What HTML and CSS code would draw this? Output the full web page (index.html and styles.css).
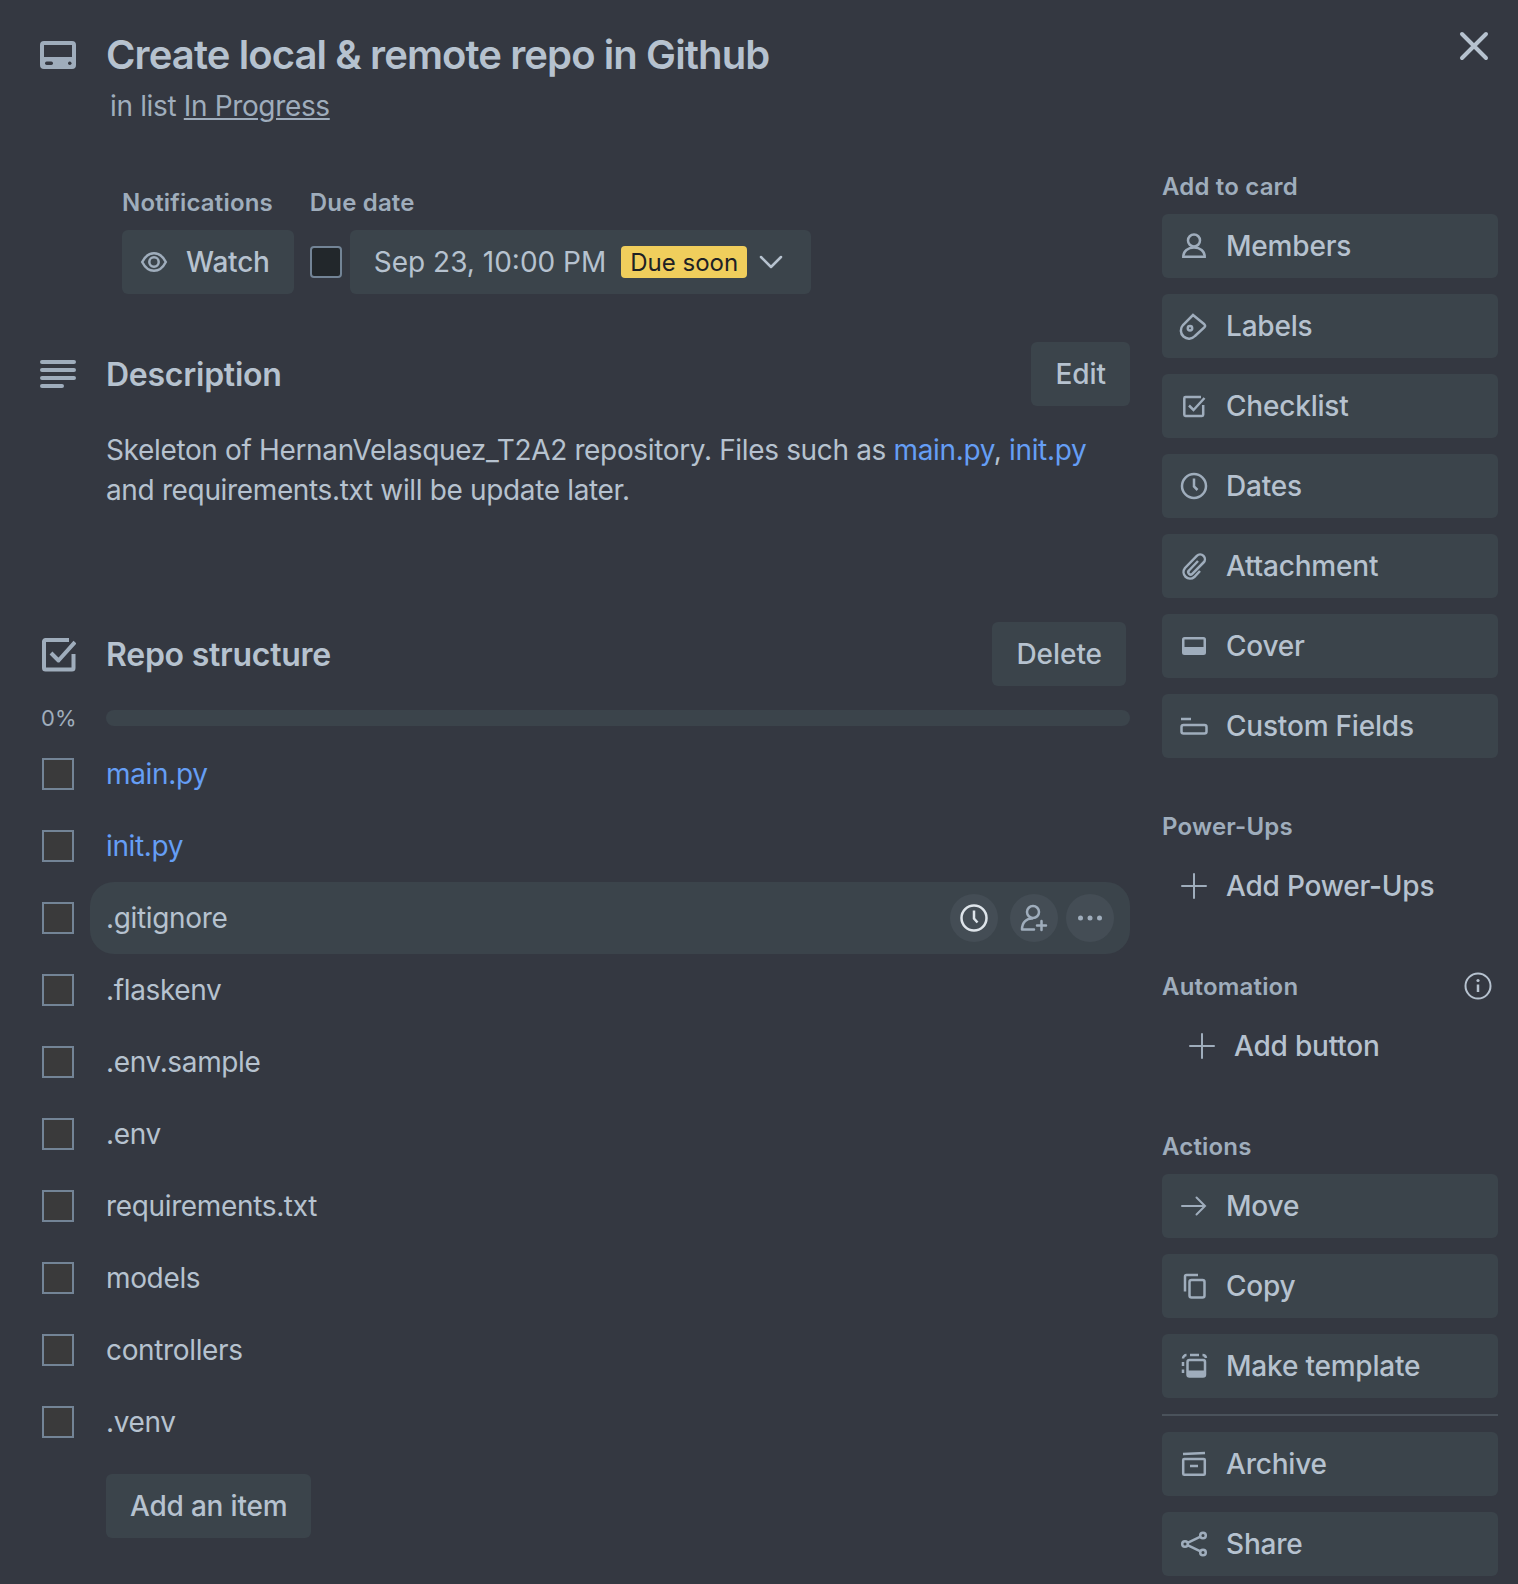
FILE: index.html
```html
<!DOCTYPE html>
<html lang="en">
<head>
    <meta name="viewport" content="width=device-width, initial-scale=1.0">
    <link rel="stylesheet" href="styles.css">
    <title>Create local &amp; remote repo in Github</title>
</head>

<body>
    <div class="card">
        <button class="close" aria-label="Close">
            <svg width="32" height="32" viewBox="0 0 32 32"><path d="M4 4 L28 28 M28 4 L4 28" fill="none" stroke="#b6c2cf" stroke-width="4" stroke-linecap="round"/></svg>
        </button>

        <header class="card-head">
            <div class="head-row">
                <span class="head-icon">
                    <svg width="36" height="28" viewBox="0 0 36 28"><path fill-rule="evenodd" fill="#9fadbc" d="M4 0 H32 A4 4 0 0 1 36 4 V24 A4 4 0 0 1 32 28 H4 A4 4 0 0 1 0 24 V4 A4 4 0 0 1 4 0 Z M4 4 V16 H32 V4 Z"/><rect x="5" y="20.5" width="8" height="3.5" rx="1.7" fill="#343841"/><rect x="28" y="20.5" width="3.5" height="3.5" rx="1.7" fill="#343841"/></svg>
                </span>
                <h1>Create local &amp; remote repo in Github</h1>
            </div>
            <p class="in-list">in list <a href="#">In Progress</a></p>
        </header>

        <main class="main-col">
            <div class="meta">
                <div>
                    <h3>Notifications</h3>
                    <button class="btn watch-btn">
                        <svg width="32" height="32" viewBox="0 0 32 32"><path d="M4.200 16 C7.500 9.500 11 7.200 16 7.200 S24.500 9.500 27.800 16 C24.500 22.500 21 24.800 16 24.800 S7.500 22.500 4.200 16 Z" fill="none" stroke="#9fadbc" stroke-width="2.500"/><circle cx="16" cy="16" r="4.700" fill="none" stroke="#9fadbc" stroke-width="2.500"/></svg>
                        Watch
                    </button>
                </div>
                <div>
                    <h3>Due date</h3>
                    <div class="due-row">
                        <span class="due-check"></span>
                        <button class="btn due-btn">
                            Sep 23, 10:00 PM
                            <span class="badge">Due soon</span>
                            <svg width="24" height="24" viewBox="0 0 24 24"><path d="M2 7 L12 17 L22 7" fill="none" stroke="#b6c2cf" stroke-width="2.500" stroke-linecap="round" stroke-linejoin="round"/></svg>
                        </button>
                    </div>
                </div>
            </div>

            <div class="section-head desc-head">
                <span class="head-icon">
                    <svg width="36" height="30" viewBox="0 0 36 30"><path d="M2 3 H34 M2 11 H34 M2 19 H34 M2 27 H22" fill="none" stroke="#9fadbc" stroke-width="4" stroke-linecap="round"/></svg>
                </span>
                <h2>Description</h2>
                <button class="btn">Edit</button>
            </div>
            <p class="desc">Skeleton of HernanVelasquez_T2A2 repository. Files such as <a href="#">main.py</a>, <a href="#">init.py</a><br>and requirements.txt will be update later.</p>

            <div class="section-head check-head">
                <span class="head-icon">
                    <svg width="36" height="36" viewBox="0 0 36 36"><path d="M29 4 H5.500 A1.500 1.500 0 0 0 4 5.500 V32 A1.500 1.500 0 0 0 5.500 33.500 H32 A1.500 1.500 0 0 0 33.500 32 V18 M11 17 L18.500 24.500 L35 6" fill="none" stroke="#9fadbc" stroke-width="4" stroke-linejoin="round"/></svg>
                </span>
                <h2>Repo structure</h2>
                <button class="btn delete-btn">Delete</button>
            </div>

            <div class="progress">
                <span class="percent">0%</span>
                <div class="bar"></div>
            </div>

            <ul class="items">
                <li class="item"><span class="box"></span><div class="item-text"><a href="#">main.py</a></div></li>
                <li class="item"><span class="box"></span><div class="item-text"><a href="#">init.py</a></div></li>
                <li class="item"><span class="box"></span>
                    <div class="item-text hover">
                        .gitignore
                        <div class="item-actions">
                            <span class="round-btn">
                                <svg width="32" height="32" viewBox="0 0 32 32"><circle cx="16" cy="16" r="12.500" fill="none" stroke="#dee4ea" stroke-width="2.500"/><path d="M16 8.500 V16.500 L19.500 20.500" fill="none" stroke="#dee4ea" stroke-width="2.500"/></svg>
                            </span>
                            <span class="round-btn">
                                <svg width="32" height="32" viewBox="0 0 32 32"><circle cx="15" cy="10" r="6" fill="none" stroke="#9fadbc" stroke-width="2.500"/><path d="M4 27.500 C4 20 9 16.500 14 16.500 M4 27.500 H16 M23.500 19 V28 M19 23.500 H28" fill="none" stroke="#9fadbc" stroke-width="2.500" stroke-linecap="round"/></svg>
                            </span>
                            <span class="round-btn">
                                <svg width="32" height="32" viewBox="0 0 32 32"><circle cx="6.500" cy="16" r="2.500" fill="#9fadbc"/><circle cx="16" cy="16" r="2.500" fill="#9fadbc"/><circle cx="25.500" cy="16" r="2.500" fill="#9fadbc"/></svg>
                            </span>
                        </div>
                    </div>
                </li>
                <li class="item"><span class="box"></span><div class="item-text">.flaskenv</div></li>
                <li class="item"><span class="box"></span><div class="item-text">.env.sample</div></li>
                <li class="item"><span class="box"></span><div class="item-text">.env</div></li>
                <li class="item"><span class="box"></span><div class="item-text">requirements.txt</div></li>
                <li class="item"><span class="box"></span><div class="item-text">models</div></li>
                <li class="item"><span class="box"></span><div class="item-text">controllers</div></li>
                <li class="item"><span class="box"></span><div class="item-text">.venv</div></li>
            </ul>

            <button class="btn add-item">Add an item</button>
        </main>

        <aside class="side-col">
            <section class="side-group">
                <h3>Add to card</h3>
                <button class="btn side-btn">
                    <svg class="ico" viewBox="0 0 32 32"><circle cx="16" cy="10.500" r="6" /><path d="M5.300 26.800 C5.300 21 10 17.500 16 17.500 S26.700 21 26.700 26.800 Z"/></svg>
                    Members
                </button>
                <button class="btn side-btn">
                    <svg class="ico" viewBox="0 0 32 32"><path d="M15 5 L26.300 14.300 Q27.800 15.800 26.300 17.300 L17 26 A8 8 0 0 1 5 15 Z"/><circle cx="12" cy="18.300" r="2.200"/></svg>
                    Labels
                </button>
                <button class="btn side-btn">
                    <svg class="ico" viewBox="0 0 32 32"><path d="M23 7 H7.500 A1.200 1.200 0 0 0 6.300 8.200 V24.800 A1.200 1.200 0 0 0 7.500 26 H24 A1.200 1.200 0 0 0 25.200 24.800 V15 M11 15.500 L15.500 20 L26.500 8"/></svg>
                    Checklist
                </button>
                <button class="btn side-btn">
                    <svg class="ico" viewBox="0 0 32 32"><circle cx="16" cy="16" r="12"/><path d="M16 8.500 V16.500 L19.500 20"/></svg>
                    Dates
                </button>
                <button class="btn side-btn">
                    <svg class="ico" viewBox="0 0 32 32"><path d="M20 11 L11 20.500 A2.300 2.300 0 0 0 14.300 23.800 L25.500 12.500 A4.700 4.700 0 0 0 18.800 5.800 L7 18 A6.500 6.500 0 0 0 16.300 27 L22 21"/></svg>
                    Attachment
                </button>
                <button class="btn side-btn">
                    <svg class="ico filled" viewBox="0 0 32 32"><path fill-rule="evenodd" d="M6.500 7 H25.500 A2.500 2.500 0 0 1 28 9.500 V22.500 A2.500 2.500 0 0 1 25.500 25 H6.500 A2.500 2.500 0 0 1 4 22.500 V9.500 A2.500 2.500 0 0 1 6.500 7 Z M6.500 9.500 V17 H25.500 V9.500 Z"/></svg>
                    Cover
                </button>
                <button class="btn side-btn">
                    <svg class="ico" viewBox="0 0 32 32"><path d="M3 9 H13"/><rect x="3.500" y="15" width="25" height="8.500" rx="2"/></svg>
                    Custom Fields
                </button>
            </section>

            <section class="side-group">
                <h3>Power-Ups</h3>
                <button class="btn side-btn plain">
                    <svg class="ico thin" viewBox="0 0 32 32"><path d="M16 4 V28 M4 16 H28"/></svg>
                    Add Power-Ups
                </button>
            </section>

            <section class="side-group">
                <div class="group-head">
                    <h3>Automation</h3>
                    <svg width="32" height="32" viewBox="0 0 32 32"><circle cx="16" cy="16" r="12.500" fill="none" stroke="#b6c2cf" stroke-width="2"/><path d="M16 14.500 V22" stroke="#b6c2cf" stroke-width="2.500" fill="none"/><circle cx="16" cy="10.500" r="1.600" fill="#b6c2cf"/></svg>
                </div>
                <button class="btn side-btn plain indent">
                    <svg class="ico thin" viewBox="0 0 32 32"><path d="M16 4 V28 M4 16 H28"/></svg>
                    Add button
                </button>
            </section>

            <section class="side-group">
                <h3>Actions</h3>
                <button class="btn side-btn">
                    <svg class="ico thin" viewBox="0 0 32 32"><path d="M4 16 H27 M18.500 7.500 L27 16 L18.500 24.500"/></svg>
                    Move
                </button>
                <button class="btn side-btn">
                    <svg class="ico" viewBox="0 0 32 32"><rect x="11.500" y="10" width="15" height="17.500" rx="2"/><path d="M7 21.500 V6.500 A1.500 1.500 0 0 1 8.500 5 H20"/></svg>
                    Copy
                </button>
                <button class="btn side-btn">
                    <svg class="ico" viewBox="0 0 32 32"><rect x="9.500" y="10" width="17.500" height="16.500" rx="2"/><rect x="9.500" y="20.500" width="17.500" height="6" fill="#9fadbc" stroke="none"/><path d="M5 8.500 A3.500 3.500 0 0 1 8.500 5 M12 5 H21 M24.500 5 A3.500 3.500 0 0 1 28 8 M5 12 V16 M5 19.500 V23"/></svg>
                    Make template
                </button>
                <hr class="side-line">
                <button class="btn side-btn">
                    <svg class="ico" viewBox="0 0 32 32"><rect x="5.200" y="11" width="21.600" height="15.800" rx="1"/><path d="M5 6 L27 5 M12 18 H20"/></svg>
                    Archive
                </button>
                <button class="btn side-btn">
                    <svg class="ico" viewBox="0 0 32 32"><circle cx="7" cy="16" r="2.800"/><circle cx="25" cy="7.500" r="2.800"/><circle cx="25" cy="24.500" r="2.800"/><path d="M9.500 14.800 L22.500 8.700 M9.500 17.200 L22.500 23.300"/></svg>
                    Share
                </button>
            </section>
        </aside>
    </div>
</body>

</html>
```

FILE: styles.css
```css
* {
    box-sizing: border-box;
}

body {
    margin: 0;
    background-color: #343841;
    color: #b6c2cf;
    font-family: Inter, "Liberation Sans", sans-serif;
    font-size: 28px;
    line-height: 40px;
    letter-spacing: -0.35px;
}

a {
    color: #659ef5;
    text-decoration: none;
}

h1,
h2,
h3,
p,
ul {
    margin: 0;
    padding: 0;
}

h1 {
    font-size: 40px;
    line-height: 48px;
    font-weight: 600;
    letter-spacing: -0.9px;
}

h2 {
    padding-top: 2px;
    font-size: 32px;
    line-height: 40px;
    font-weight: 600;
    letter-spacing: -0.25px;
}

h3 {
    padding-top: 1px;
    font-size: 24px;
    line-height: 32px;
    font-weight: 600;
    letter-spacing: 0.18px;
    color: #9fadbc;
}

.card {
    position: relative;
    display: grid;
    grid-template-columns: 1090px 336px;
    column-gap: 32px;
    width: 1518px;
    height: 1584px;
    padding: 0 20px 0 40px;
    overflow: hidden;
}

.close {
    position: absolute;
    top: 30px;
    right: 28px;
    padding: 0;
    border: none;
    background: none;
    line-height: 0;
}

.card-head {
    grid-column: 1 / 3;
    height: 170px;
    padding-top: 31px;
}

.head-row {
    display: flex;
    align-items: center;
}

.head-icon {
    display: flex;
    flex: none;
    width: 66px;
}

.in-list {
    margin: 7px 0 0 70px;
    color: #9fadbc;
}

.in-list a {
    color: #9fadbc;
    text-decoration: underline;
}

.btn {
    display: flex;
    align-items: center;
    height: 64px;
    padding: 0 24px;
    border: none;
    border-radius: 6px;
    background-color: #3b444b;
    color: #b6c2cf;
    font-family: inherit;
    font-size: 28px;
    font-weight: 500;
    letter-spacing: -0.2px;
    white-space: nowrap;
}

.meta {
    display: flex;
    gap: 16px;
    padding: 16px 0 0 82px;
}

.meta h3 {
    margin-bottom: 11px;
}

.watch-btn {
    gap: 16px;
    padding-left: 16px;
}

.due-row {
    display: flex;
    align-items: center;
    gap: 8px;
}

.due-check {
    width: 32px;
    height: 32px;
    border: 2px solid #738496;
    border-radius: 4px;
    background-color: #22272b;
}

.due-btn {
    padding-right: 28px;
    font-weight: 400;
    letter-spacing: 0;
}

.badge {
    height: 32px;
    margin: 0 12px 0 15px;
    padding: 0 9px;
    border-radius: 4px;
    background-color: #f0ce5c;
    color: #1d2125;
    font-size: 24px;
    line-height: 33px;
    letter-spacing: 0;
}

.section-head {
    display: flex;
    align-items: center;
}

.section-head h2 {
    flex: 1;
}

.section-head .btn {
    letter-spacing: -0.05px;
}

.desc-head {
    margin-top: 48px;
}

.desc {
    margin: 24px 0 0 66px;
}

.check-head {
    margin-top: 112px;
}

.delete-btn {
    margin-right: 4px;
}

.progress {
    display: flex;
    align-items: center;
    height: 16px;
    margin-top: 24px;
}

.percent {
    flex: none;
    width: 66px;
    padding-left: 1px;
    color: #9fadbc;
    font-size: 22px;
    letter-spacing: 0;
}

.bar {
    flex: 1;
    height: 16px;
    border-radius: 8px;
    background-color: #3b444b;
}

.items {
    margin-top: 12px;
    list-style: none;
}

.item {
    display: flex;
    align-items: center;
    height: 72px;
}

.box {
    flex: none;
    width: 32px;
    height: 32px;
    margin: 0 16px 0 2px;
    border: 2px solid #738496;
    background-color: #3a3a3b;
}

.item-text {
    display: flex;
    flex: 1;
    align-items: center;
    height: 72px;
    padding: 0 16px;
    border-radius: 24px;
}

.item-text.hover {
    background-color: #3b444b;
}

.item-actions {
    display: flex;
    gap: 8px;
    margin-left: auto;
}

.item-actions .round-btn + .round-btn {
    margin-left: 4px;
}

.item-actions .round-btn:last-child {
    margin-left: 0;
}

.round-btn {
    display: flex;
    align-items: center;
    justify-content: center;
    width: 48px;
    height: 48px;
    border-radius: 50%;
    background-color: #444d55;
}

.add-item {
    margin: 16px 0 0 66px;
}

.side-group {
    margin-bottom: 52px;
}

.side-group h3 {
    margin-bottom: 11px;
}

.group-head {
    display: flex;
    justify-content: space-between;
    padding-right: 4px;
}

.side-btn {
    width: 100%;
    gap: 16px;
    padding: 0 16px;
    margin-bottom: 16px;
}

.side-group .side-btn:last-child {
    margin-bottom: 0;
}

.side-btn.plain {
    background: none;
}

.side-btn.indent {
    padding-left: 24px;
}

.ico {
    flex: none;
    width: 32px;
    height: 32px;
    fill: none;
    stroke: #9fadbc;
    stroke-width: 2.5;
}

.ico.thin {
    stroke-width: 2;
    stroke-linecap: round;
}

.ico.filled {
    fill: #9fadbc;
    stroke: none;
}

.side-line {
    height: 2px;
    margin: 0 0 16px;
    border: none;
    background-color: #4a525b;
}
```
